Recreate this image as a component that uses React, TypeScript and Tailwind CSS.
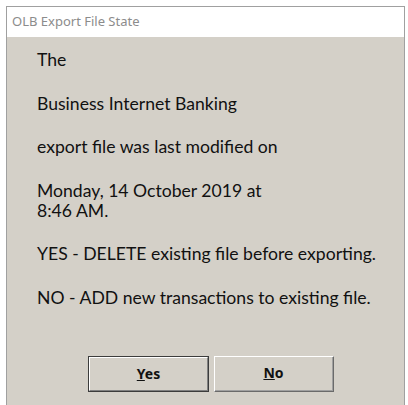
export default function App() {
  const lines = [
    ['The'],
    ['Business Internet Banking'],
    ['export file was last modified on'],
    ['Monday, 14 October 2019 at', '8:46 AM.'],
    ['YES - DELETE existing file before exporting.'],
    ['NO - ADD new transactions to existing file.'],
  ]

  return (
    <div className="w-[408px] h-[405px] bg-white pl-[6px] pt-[6px] overflow-hidden">
      <div className="w-[399px] h-[399px] flex flex-col border-l border-t border-r border-[#a0a0a0]">
        <div className="h-[30px] shrink-0 bg-white flex items-center pl-[5px] text-[13px] text-[#8c8c8c] font-['Noto_Sans',sans-serif]">
          OLB Export File State
        </div>
        <div className="flex-1 bg-[#d4d0c8] pl-[30px] pt-[13px] font-['Lato',sans-serif] text-[17.6px] leading-[20px] text-[#111]">
          <div className="flex flex-col gap-[23.5px]">
            {lines.map((p, i) => (
              <div key={i}>
                {p.map((l, j) => (
                  <div key={j}>{l}</div>
                ))}
              </div>
            ))}
          </div>
          <div className="flex gap-[5px] mt-[48px] ml-[51px] font-['Noto_Sans',sans-serif] text-[14px] font-bold text-[#111]">
            <button className="w-[121px] h-[36px] border border-[#3c3c3c] bg-[#d4d0c8] p-0">
              <div className="h-full w-full border-t border-l border-white border-r border-b border-r-[#808080] border-b-[#808080] flex items-center justify-center">
                <span><u>Y</u>es</span>
              </div>
            </button>
            <button className="w-[120px] h-[36px] bg-[#d4d0c8] border-t border-l border-white border-r border-b border-r-[#6a6a6a] border-b-[#6a6a6a] p-0">
              <div className="h-full w-full border-r border-b border-[#a0a0a0] flex items-center justify-center">
                <span><u>N</u>o</span>
              </div>
            </button>
          </div>
        </div>
      </div>
    </div>
  )
}
